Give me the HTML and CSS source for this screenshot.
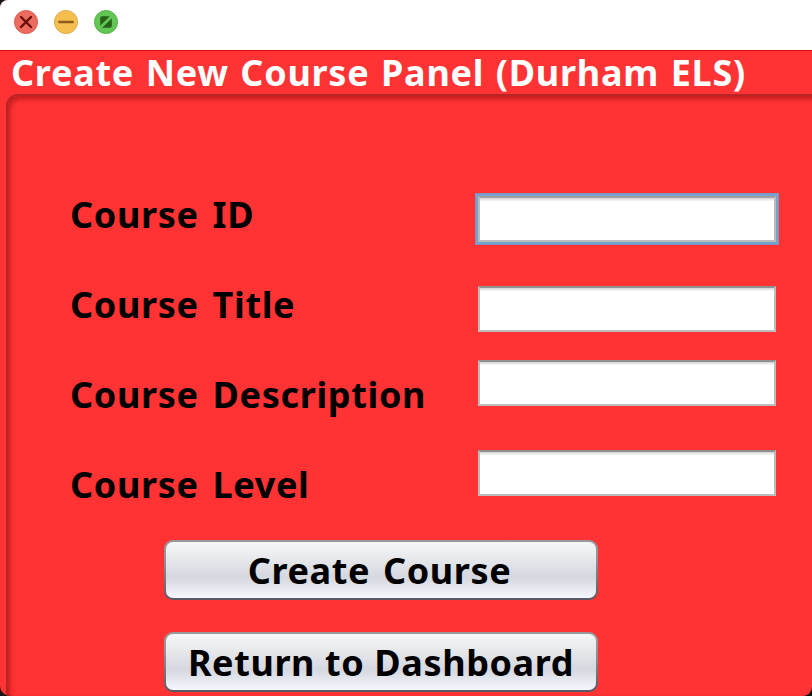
FILE: index.html
```html
<!DOCTYPE html>
<html lang="en">
<head>
<meta charset="utf-8">
<title>Create New Course</title>
<link rel="stylesheet" href="styles.css">
</head>
<body>
<div class="window">
  <header class="titlebar">
    <svg class="light" viewBox="0 0 24 24"><circle cx="12" cy="12" r="11.6" fill="#ed6a5f" stroke="#d6544a" stroke-width=".8"/><path d="M7 7l10 10M17 7L7 17" stroke="#680d06" stroke-width="2.4" stroke-linecap="round"/></svg>
    <svg class="light" viewBox="0 0 24 24"><circle cx="12" cy="12" r="11.6" fill="#f5bf4f" stroke="#d8a13d" stroke-width=".8"/><path d="M5.3 12h13.4" stroke="#905b1c" stroke-width="2.5" stroke-linecap="round"/></svg>
    <svg class="light" viewBox="0 0 24 24"><circle cx="12" cy="12" r="11.6" fill="#62c655" stroke="#4fac3d" stroke-width=".8"/><path d="M6.2 15.8V8q0-1.8 1.8-1.8h7.8zM17.8 8.2V16q0 1.8-1.8 1.8H8.2z" fill="#286017"/></svg>
  </header>
  <main class="content">
    <h1 class="heading">Create New Course Panel (Durham ELS)</h1>
    <section class="panel">
      <form class="form">
        <div class="labels">
          <label for="cid">Course ID</label>
          <label for="title">Course Title</label>
          <label for="desc">Course Description</label>
          <label for="level">Course Level</label>
        </div>
        <div class="fields">
          <input class="field focused" id="cid" type="text">
          <input class="field" id="title" type="text">
          <input class="field" id="desc" type="text">
          <input class="field" id="level" type="text">
        </div>
      </form>
      <div class="actions">
        <button class="button create" type="button">Create Course</button>
        <button class="button return" type="button">Return to Dashboard</button>
      </div>
    </section>
  </main>
</div>
</body>
</html>
```
FILE: styles.css
```css
* { box-sizing: border-box; }
html { background: #151515; }
body { margin: 0; height: 696px; overflow: hidden; font: bold 36px/48px "Noto Sans", sans-serif; color: #000; }
.window { height: 696px; overflow: hidden; border-radius: 8px 0 9px 10px; background: #f33; display: flex; flex-direction: column; }
.titlebar { flex: none; height: 50px; background: #fff; display: flex; align-items: flex-start; gap: 16px; padding: 10px 14px; }
.light { display: block; width: 24px; height: 24px; }
.content { flex: 1; border-top: 1px solid #dd0a0a; padding-left: 6px; display: flex; flex-direction: column; }
.heading { margin: 0; padding: 0 0 0 5px; height: 43px; line-height: 44px; font-size: 36px; color: #fff; white-space: nowrap; letter-spacing: .72px; word-spacing: 1.6px; }
.panel {
  flex: 1; margin-right: -20px; border: 2px solid #b92525; border-width: 2px 0 0 2px; border-radius: 12px 0 0 0;
  box-shadow: inset 2px 3px 5px rgba(120, 0, 0, .45);
}
.form { display: flex; padding: 94px 0 0 62px; height: 424px; }
.labels { width: 408px; padding-top: 1px; display: flex; flex-direction: column; gap: 42px; letter-spacing: .65px; word-spacing: 4px; white-space: nowrap; }
.labels label { display: block; height: 48px; }
.fields { display: flex; flex-direction: column; padding-top: 6px; gap: 44px; }
.field {
  display: block; width: 298px; height: 46px; margin: 0; padding: 0 6px; outline: 0; border-radius: 0;
  border: 2px solid #bcbcbc; border-top-color: #909090; background: linear-gradient(#d8d8d8 0 1px, #e6e6e6 1px 2px, #f2f2f2 2px 3px, #fff 3px); background-clip: padding-box;
  font: inherit;
}
.focused { box-shadow: 0 0 0 2px #73a4d1, 0 0 0 3px #8a91bc; border-top-color: #a0a0a0; }
.field:nth-child(3) { margin-top: -16px; }
.actions { display: flex; flex-direction: column; gap: 32px; padding: 20px 0 0 156px; }
.button {
  width: 434px; height: 60px; padding: 2px 0 0; border: 2px solid transparent; border-radius: 9px; color: #000;
  background: linear-gradient(#f6f7f7, #d5d8df 62%, #d8dbe2 68%, #f7f8ff) padding-box, linear-gradient(#98999c, #91959b 30%, #565a66) border-box;
  font: inherit; letter-spacing: .6px; white-space: nowrap;
}
.create { padding-right: 3px; word-spacing: 3px; }
```
